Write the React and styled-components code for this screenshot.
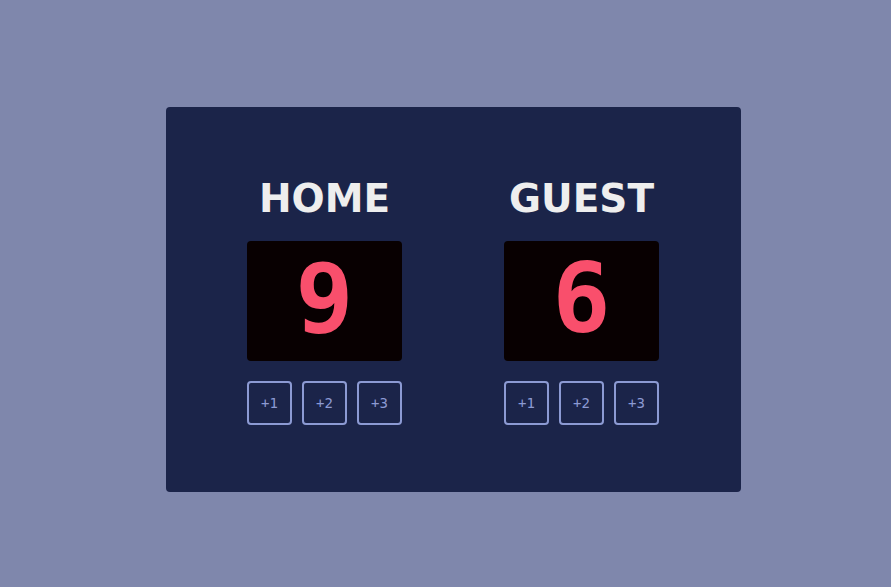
import React from 'react';
import styled, {createGlobalStyle} from "styled-components";

const GlobalStyle = createGlobalStyle`
    html, body {
        margin: 0;
        padding: 0;
        background-color: #7f87ac;
    }
`;

const Page = styled.div`
    min-height: 100vh;
    box-sizing: border-box;
    padding: 12px 0 0 16px;
    display: flex;
    justify-content: center;
    align-items: center;
`;

const Board = styled.div`
    width: 575px;
    height: 385px;
    box-sizing: border-box;
    padding: 68px 0 0 81px;
    background-color: #1b2449;
    border-radius: 4px;

    display: flex;
    justify-content: flex-start;
    align-items: flex-start;
    gap: 102px;
`;

const Team = styled.div`
    width: 155px;
    display: flex;
    flex-flow: column nowrap;
    align-items: center;
`;

const TeamName = styled.h2`
    margin: 0 0 18px;
    font-family: "DejaVu Sans", Verdana, sans-serif;
    font-size: 39px;
    line-height: 48px;
    font-weight: 700;
    color: #eeeeee;
    white-space: nowrap;
`;

const Score = styled.div`
    width: 155px;
    height: 120px;
    box-sizing: border-box;
    padding-bottom: 6px;
    background-color: #080001;
    border-radius: 4px;
    display: flex;
    justify-content: center;
    align-items: center;

    font-family: "DejaVu Sans Mono", monospace;
    font-size: 97px;
    font-weight: 700;
    line-height: 1;
    color: #f94f6c;
`;

const Buttons = styled.div`
    margin-top: 20px;
    display: flex;
    gap: 10px;
`;

const AddButton = styled.button`
    width: 45px;
    height: 44px;
    box-sizing: border-box;
    padding: 0;
    background: transparent;
    border: 2px solid #8c9ad3;
    border-radius: 4px;
    color: #8c9ad3;
    font-family: "DejaVu Sans Mono", monospace;
    font-size: 14px;
    cursor: pointer;
`;

function TeamPanel({name, score, onAdd}){
    return <Team>
        <TeamName>{name}</TeamName>
        <Score>{score}</Score>
        <Buttons>
            {[1, 2, 3].map(n =>
                <AddButton key={n} onClick={() => onAdd(n)}>+{n}</AddButton>
            )}
        </Buttons>
    </Team>
}

export default function App(){
    const [home, setHome] = React.useState(9);
    const [guest, setGuest] = React.useState(6);

    return <Page>
        <GlobalStyle />
        <Board>
            <TeamPanel name="HOME" score={home} onAdd={n => setHome(home + n)} />
            <TeamPanel name="GUEST" score={guest} onAdd={n => setGuest(guest + n)} />
        </Board>
    </Page>
}
